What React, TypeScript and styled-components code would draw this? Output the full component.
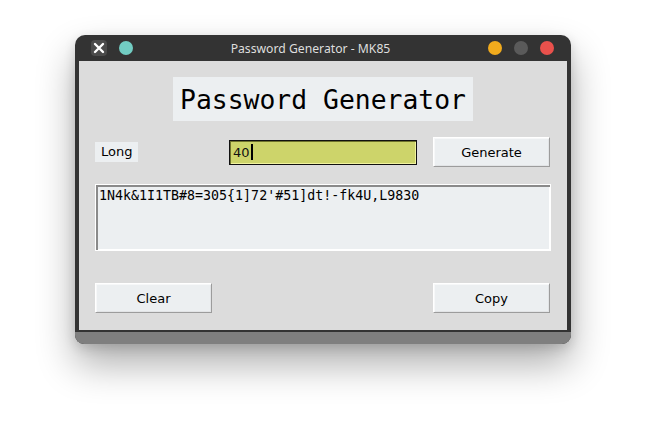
import { FC } from "react";
import styled, { createGlobalStyle } from "styled-components";

const GlobalStyle = createGlobalStyle`
    html, body {
        margin: 0;
        padding: 0;
        background: #ffffff;
    }
    body {
        font-family: "DejaVu Sans", sans-serif;
    }
`;

// page
const Page = styled.div`
    width: 646px;
    height: 430px;
    display: flex;
    justify-content: center;
    padding-top: 35px;
    box-sizing: border-box;
`;

// window frame
const Window = styled.div`
    width: 496px;
    height: 309px;
    display: flex;
    flex-direction: column;
    background: #333333;
    border-radius: 10px 10px 9px 9px;
    box-shadow: 0 20px 38px rgba(0, 0, 0, 0.32), 0 4px 12px rgba(0, 0, 0, 0.14);
`;

const TitleBar = styled.div`
    height: 26px;
    display: flex;
    align-items: center;
    padding: 0 17px 0 16px;
    gap: 12px;
`;

const CloseIcon = styled.div`
    width: 16px;
    height: 16px;
    display: flex;
    align-items: center;
    justify-content: center;
    border-radius: 4px;
    background: #4b4b4b;
`;

const Dot = styled.div<{ color: string }>`
    width: 14px;
    height: 14px;
    border-radius: 50%;
    background: ${(props) => props.color};
`;

const Title = styled.div`
    flex: 1;
    text-align: center;
    color: #dedede;
    font-family: "Noto Sans", sans-serif;
    font-size: 12.2px;
`;

const Controls = styled.div`
    display: flex;
    gap: 12px;
`;

// body
const Body = styled.div`
    height: 269px;
    margin: 0 4px;
    background: #dcdcdc;
    display: flex;
    flex-direction: column;
    align-items: center;
    padding: 16px 16px 0;
    box-sizing: border-box;
`;

const Heading = styled.div`
    width: 300px;
    height: 44px;
    background: #eceff1;
    display: flex;
    align-items: center;
    justify-content: center;
    font-family: "DejaVu Sans Mono", monospace;
    font-size: 26.4px;
    color: #000;
`;

const Row = styled.div`
    width: 100%;
    margin-top: 16px;
    display: grid;
    grid-template-columns: 134px 204px 117px;
    align-items: center;
`;

const BottomRow = styled.div`
    width: 100%;
    margin-top: 32px;
    padding-right: 1px;
    box-sizing: border-box;
    display: flex;
    justify-content: space-between;
`;

const Label = styled.div`
    justify-self: start;
    height: 20px;
    padding: 0 6px;
    background: #eceff1;
    font-size: 13px;
    line-height: 20px;
    color: #000;
`;

const Entry = styled.div`
    width: 188px;
    height: 25px;
    box-sizing: border-box;
    background: #cdd46a;
    border: 1px solid #111;
    box-shadow: inset 1px 1px 0 #6e722c, inset -1px -1px 0 #f1f39f;
    display: flex;
    align-items: center;
    padding-left: 3px;
    font-size: 13px;
    color: #111;
`;

const Caret = styled.span`
    display: inline-block;
    width: 2px;
    height: 16px;
    margin-left: 1px;
    background: #000;
`;

const Button = styled.div`
    width: 117px;
    height: 30px;
    box-sizing: border-box;
    background: #eceff1;
    border-top: 1px solid #ffffff;
    border-left: 1px solid #ffffff;
    border-right: 1px solid #9c9c9c;
    border-bottom: 1px solid #9c9c9c;
    box-shadow: inset 1px 1px 0 #f7f8f9, inset -1px -1px 0 #e2e4e6;
    display: flex;
    align-items: center;
    justify-content: center;
    font-size: 13px;
    color: #000;
`;

const Output = styled.div`
    width: 100%;
    height: 67px;
    margin-top: 17px;
    box-sizing: border-box;
    background: #eceff1;
    border: 1px solid #ffffff;
    box-shadow: inset 2px 2px 0 #8a8a8a, inset -1px -1px 0 #ffffff;
    padding: 3px 3px;
    font-family: "DejaVu Sans Mono", monospace;
    font-size: 13.3px;
    line-height: 16px;
    color: #000;
`;

const Footer = styled.div`
    height: 12px;
    margin-top: 2px;
    background: #7f7f7f;
    border-radius: 0 0 9px 9px;
`;

const App: FC = () => {
    return (
        <>
            <GlobalStyle />
            <Page>
                <Window>
                    <TitleBar>
                        <CloseIcon>
                            <svg width="12" height="12" viewBox="0 0 12 12">
                                <path d="M2 2 L10 10 M10 2 L2 10" stroke="#ffffff" strokeWidth="2.4" strokeLinecap="round" />
                            </svg>
                        </CloseIcon>
                        <Dot color="#72cdc3" />
                        <Title>Password Generator - MK85</Title>
                        <Controls>
                            <Dot color="#f1ab1d" />
                            <Dot color="#5a5a5a" />
                            <Dot color="#e9514c" />
                        </Controls>
                    </TitleBar>
                    <Body>
                        <Heading>Password Generator</Heading>
                        <Row>
                            <Label>Long</Label>
                            <Entry>
                                40<Caret />
                            </Entry>
                            <Button>Generate</Button>
                        </Row>
                        <Output>1N4k&amp;1I1TB#8=305{"{"}1]72'#51]dt!-fk4U,L9830</Output>
                        <BottomRow>
                            <Button>Clear</Button>
                            <Button>Copy</Button>
                        </BottomRow>
                    </Body>
                    <Footer />
                </Window>
            </Page>
        </>
    );
};

export default App;
